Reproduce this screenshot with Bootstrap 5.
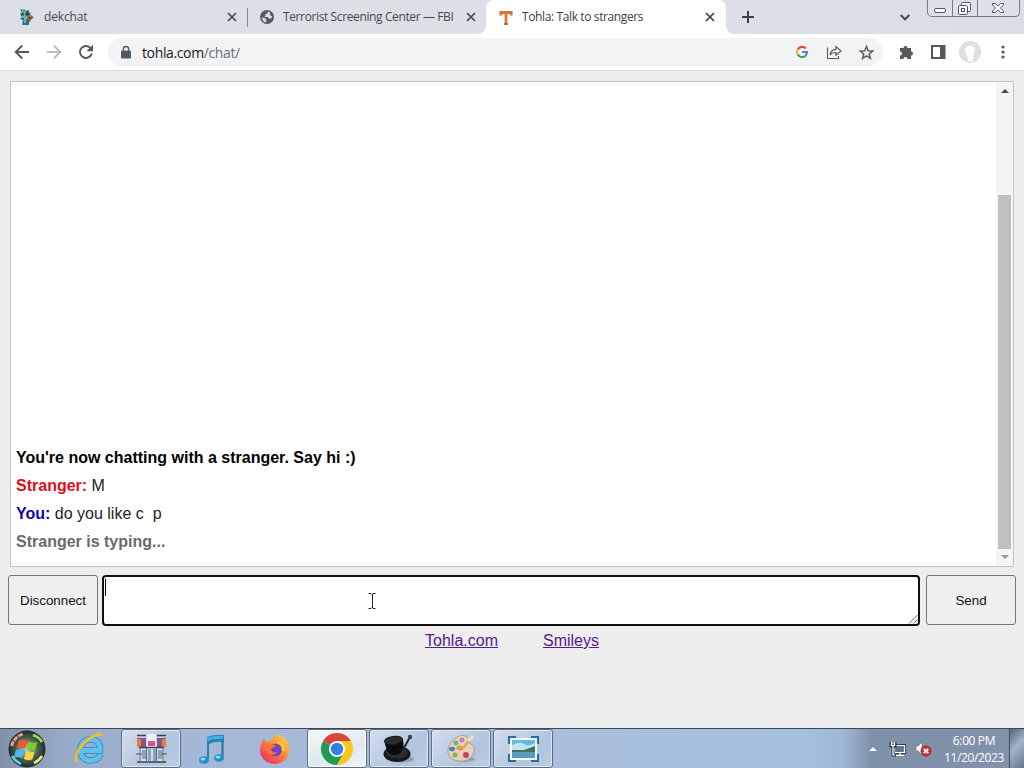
<!DOCTYPE html>
<html lang="en">
<head>
<meta charset="utf-8">
<meta name="viewport" content="width=device-width, initial-scale=1">
<title>Tohla: Talk to strangers</title>
<link href="https://cdn.jsdelivr.net/npm/bootstrap@5.3.0/dist/css/bootstrap.min.css" rel="stylesheet">
<style>
body{width:1024px;height:768px;background:#eee;font-family:"Liberation Sans",Arial,sans-serif;color:#222}
svg{display:block;flex:none;overflow:visible}
.ui-font{font-family:"Open Sans","Noto Sans",sans-serif}
.tabstrip{height:34px;background:linear-gradient(90deg,#dddfe7,#dcdfe5 70%,#dbdee6 85%,#dadde8)}
.tab-item{height:34px;font-size:12px;letter-spacing:-.38px;color:#45484c;line-height:34px}
.tab-sep{width:1px;height:19px;background:#85888f}
.tab-live{width:240px;background:#fff;border-radius:8px 8px 0 0;color:#3c4043}
.tab-live::before,.tab-live::after{content:"";position:absolute;bottom:0;width:8px;height:8px}
.tab-live::before{left:-8px;background:radial-gradient(circle at 0 0,transparent 7.5px,#fff 8px)}
.tab-live::after{right:-8px;background:radial-gradient(circle at 100% 0,transparent 7.5px,#fff 8px)}
.win-controls{width:93px;height:17px;border:1px solid #777b84;border-top:0;border-radius:0 0 5px 5px;background:#dfe1ea}
.win-controls>span{border-right:1px solid #777b84}
.toolbar{height:37px;background:#fff;border-bottom:1px solid #dedede}
.omnibox{width:775px;height:28px;background:#f1f3f4;border-radius:14px}
.address{font-size:14px;letter-spacing:-.37px;color:#202124}
.address span{color:#6b6f74}
.page{height:657px;padding:10px 8px 0}
.chatlog{width:1004px;height:486px;margin-left:2px;border:1px solid #c4c4c4;background:#fff}
.chat-lines{padding:0 0 10px 5px;font-size:16px;line-height:28px;white-space:pre}
.c-sys{color:#000}.c-them{color:#e10f14}.c-you{color:#0b06b4}.c-typing{color:#6a6a6a}
.scroller{width:17px;background:#f5f5f5}
.scroll-thumb{width:13px;height:354px;margin-top:102px;background:#bfbfbf}
.chat-btn{width:90px;height:50px;padding:2px 0 0;border:1px solid #767676;border-radius:3px;background:#efefef;color:#111;font-size:13.333px}
.entry{width:818px;height:51px;border:2px solid #101010;border-radius:4px;background:#fff}
.caret{width:1px;height:17px;background:#000;margin:2px 0 0 1px}
.ibeam{left:264px;top:16px}
.grip{right:0;bottom:0}
.links{font-size:16px;line-height:20px;gap:45px}
.links a{color:#551a8b;text-decoration:underline}
.taskbar{height:40px;border-top:1px solid #3c4659;background:linear-gradient(90deg,#8192aa 0,#96a9c5 60px,#a4b8d6 180px,#a9bfdc 600px,#a5bfdf 810px,#a0b8d6 842px,#7f91a9 872px,#8192a9 1008px)}
.task-btn{width:60px;height:39px;border:1px solid #5d6c85;border-radius:3px;background:linear-gradient(135deg,#d4deed,#b1c4de 65%,#bccde3);box-shadow:inset 0 0 0 1px #dce6f2}
.task-on{background:linear-gradient(160deg,#f5f8fb,#dee8ef 60%,#eef5f8);box-shadow:inset 0 0 0 1px #fff}
.clock{font-size:12px;line-height:17px;color:#fff;letter-spacing:-.37px;width:70px}
.peek{width:15px;border-left:1px solid #3f4d61;background:linear-gradient(135deg,#56657a,#a4b2c4 45%,#66758b)}
</style>
<script src="https://cdn.jsdelivr.net/npm/bootstrap@5.3.0/dist/js/bootstrap.bundle.min.js"></script>
</head>
<body class="d-flex flex-column overflow-hidden m-0">
<header class="ui-font">
  <div class="tabstrip d-flex">
    <div class="tab-item d-flex align-items-center" style="width:247px">
      <svg style="margin:0 7px 0 18px" width="19" height="18" viewBox="0 0 19 18"><path d="M2 1l3 1 1-1 2 2 2-1 2 3 1 3-2 1 1 3 1 1-2 1v3H4l1-5-3-1 2-2-2-3 2-1z" fill="#2f6f72"/><path d="M4 3l3 1v3l2 4M4 8l3 2v5" stroke="#76bbb6" stroke-width="1.800" fill="none"/><path d="M9 7l5 .5 2 2-4 3-3-2z" fill="#bd654a"/><path d="M8 5h2v2H8zM3 6h2M10 10h4" stroke="#273d43" fill="none"/></svg>
      <span class="flex-grow-1" style="letter-spacing:-.15px">dekchat</span>
      <svg style="margin-right:7px" width="16" height="16" viewBox="0 0 16 16"><path d="M4 4l8 8m0-8l-8 8" stroke="#45484c" stroke-width="1.700"/></svg>
    </div>
    <span class="tab-sep align-self-center"></span>
    <div class="tab-item d-flex align-items-center" style="width:238px">
      <svg style="margin:0 9px 0 12px" width="14" height="14" viewBox="0 0 14 14"><circle cx="7" cy="7" r="7" fill="#55595d"/><path d="M8 1.800L7.300 3.500 5.500 4v1.500L4.500 7H8l.6 1.600 1.900.2L12.300 7 11 5.600 9.500 5l.8-1.600L9.500 2z" fill="#dde0e6"/><path d="M1.500 7.200L4.700 8l1.600 1.500v3L3.500 11.500z" fill="#dde0e6"/></svg>
      <span class="flex-grow-1 text-nowrap">Terrorist Screening Center — FBI</span>
      <svg style="margin-right:7px" width="16" height="16" viewBox="0 0 16 16"><path d="M4 4l8 8m0-8l-8 8" stroke="#45484c" stroke-width="1.700"/></svg>
    </div>
    <div class="tab-item tab-live position-relative d-flex align-items-center">
      <svg style="margin:0 9px 0 13px" width="14" height="15" viewBox="0 0 14 15"><path d="M1.800 5.500V2.500h10.400v3M7 2.500V14" stroke="#dc752c" stroke-width="2.800" fill="none"/><path d="M5 14h4" stroke="#c76a2d" stroke-width="2"/></svg>
      <span class="flex-grow-1">Tohla: Talk to strangers</span>
      <svg class="me-2" width="16" height="16" viewBox="0 0 16 16"><path d="M4 4l8 8m0-8l-8 8" stroke="#3c4043" stroke-width="1.700"/></svg>
    </div>
    <svg class="align-self-center" style="margin-left:16px" width="12" height="12" viewBox="0 0 12 12"><path d="M6 0v12M0 6h12" stroke="#3c4043" stroke-width="2"/></svg>
    <svg class="align-self-center ms-auto" style="margin-right:17px" width="10" height="7" viewBox="0 0 10 7"><path d="M.7 1L5 5.400 9.300 1" stroke="#45484c" stroke-width="2" fill="none"/></svg>
    <div class="win-controls d-flex me-1">
      <span style="width:25px"><svg width="24" height="16"><rect x="6.500" y="8.500" width="11" height="4" rx="1.500" fill="#f6f6f8" stroke="#555963"/></svg></span>
      <span style="width:25px"><svg width="24" height="16" fill="#f6f6f8" stroke="#555963"><rect x="8.500" y="2.500" width="9" height="9" rx="1"/><rect x="5.500" y="5.500" width="9" height="9" rx="1"/><rect x="8.500" y="8.500" width="3" height="3"/></svg></span>
      <svg width="40" height="16"><path d="M14.500 3.500h3l2.500 2.500 2.500-2.500h3v1.500l-3 3 3 3v1.500h-3l-2.500-2.500-2.500 2.500h-3v-1.500l3-3-3-3z" fill="#f6f6f8" stroke="#555963"/></svg>
    </div>
  </div>
  <div class="toolbar d-flex align-items-center">
    <svg style="margin-left:14px" width="16" height="16" viewBox="0 0 16 16"><path d="M15 8H2M8.200 1.500L1.700 8l6.500 6.500" stroke="#55585c" stroke-width="1.900" fill="none"/></svg>
    <svg class="ms-3" width="16" height="16" viewBox="0 0 16 16"><path d="M1 8h13M7.800 1.500L14.300 8l-6.500 6.500" stroke="#babcbe" stroke-width="1.900" fill="none"/></svg>
    <svg class="ms-3" width="16" height="16" viewBox="0 0 16 16"><path d="M13 4.600A6 6 0 1 0 13.800 9.500" stroke="#55585c" stroke-width="1.900" fill="none"/><path d="M15 .8v6.500H8.500z" fill="#55585c"/></svg>
    <div class="omnibox d-flex align-items-center" style="margin-left:14px">
      <svg style="margin:0 11px 0 13px" width="10" height="13" viewBox="0 0 10 13"><rect y="4.500" width="10" height="8" rx="1" fill="#55585c"/><path d="M2.300 5V3.200a2.700 2.700 0 0 1 5.400 0V5" stroke="#55585c" stroke-width="1.300" fill="none"/></svg>
      <span class="address flex-grow-1">tohla.com<span>/chat/</span></span>
      <svg width="12" height="12" viewBox="0 0 12 12" fill="none" stroke-width="2.100"><path d="M9.800 2.500A5 5 0 0 0 1.700 3.500" stroke="#df4b3c"/><path d="M1.700 3.500a5 5 0 0 0 0 5" stroke="#f0b51b"/><path d="M1.700 8.500a5 5 0 0 0 7.800 1.200" stroke="#3ba55a"/><path d="M9.500 9.700A5 5 0 0 0 11 6H6" stroke="#4285e8"/></svg>
      <svg style="margin-left:18px" width="16" height="16" viewBox="0 0 16 16"><path d="M1.500 3.500v11h11V12M4 11c.4-4 2.500-5.500 6-5.700V2.500L15 7l-5 4.300V8.500C7 8.500 5.300 9 4 11z" stroke="#5a5d61" stroke-width="1.200" fill="none"/></svg>
      <svg style="margin:0 9px 0 17px" width="15" height="15" viewBox="0 0 15 15"><path d="M7.500 1.500l1.700 4.200 4.500.3-3.500 2.900 1.200 4.500-3.900-2.500-3.900 2.500 1.200-4.500L1.300 6l4.500-.3z" stroke="#5a5d61" stroke-width="1.500" fill="none"/></svg>
    </div>
    <svg style="margin-left:16px" width="15" height="15" viewBox="0 0 15 15"><path d="M1 3h3.500a2 2 0 1 1 4 0H12v3.500a2 2 0 1 1 0 4V14H8.500a2 2 0 0 0-4 0H1v-3.500a2 2 0 0 0 0-4z" fill="#55585c"/></svg>
    <svg style="margin-left:17px" width="15" height="14" viewBox="0 0 15 14"><rect x="1" y="1" width="12.500" height="12" fill="none" stroke="#55585c" stroke-width="2"/><path d="M9 1h5v12H9z" fill="#55585c"/></svg>
    <svg style="margin-left:13px" width="22" height="22" viewBox="0 0 22 22"><circle cx="11" cy="11" r="11" fill="#dedede"/><path d="M11 4.500c4 0 5.200 3 4.700 6-.3 2-1.500 3.500-1.500 5.500 0 2 .3 3 .3 4.500h-6c.5-2 .2-3.500-.3-5C7 13.500 6.200 12 6.200 9.500s1.800-5 4.800-5z" fill="#fff"/></svg>
    <svg style="margin-left:20px" width="4" height="14" fill="#55585c"><circle cx="2" cy="2" r="1.600"/><circle cx="2" cy="7" r="1.600"/><circle cx="2" cy="12" r="1.600"/></svg>
  </div>
</header>
<main class="page">
  <section class="chatlog d-flex">
    <div class="chat-lines flex-grow-1 d-flex flex-column justify-content-end">
      <div class="fw-bold c-sys">You're now chatting with a stranger. Say hi :)</div>
      <div><b class="c-them">Stranger:</b> M</div>
      <div><b class="c-you">You:</b> do you like c  p</div>
      <div class="fw-bold c-typing">Stranger is typing...</div>
    </div>
    <div class="scroller d-flex flex-column align-items-center">
      <svg style="margin-top:7px" width="8" height="4"><path d="M0 4l4-4 4 4z" fill="#484848"/></svg>
      <div class="scroll-thumb"></div>
      <svg style="margin-top:6px" width="8" height="4"><path d="M0 0l4 4 4-4z" fill="#9a9a9a"/></svg>
    </div>
  </section>
  <div class="d-flex align-items-start" style="margin-top:8px">
    <button class="chat-btn">Disconnect</button>
    <div class="entry position-relative" style="margin:0 6px 0 4px">
      <div class="caret"></div>
      <svg class="ibeam position-absolute" width="8" height="16"><path d="M.5 .5h2.500l1 1 1-1h2.500M.5 15.500h2.500l1-1 1 1h2.500M4.500 1v14" stroke="#222" fill="none"/></svg>
      <svg class="grip position-absolute" width="10" height="10"><path d="M1 9.500L9.500 1M5.500 9.500l4-4" stroke="#666" fill="none"/></svg>
    </div>
    <button class="chat-btn">Send</button>
  </div>
  <div class="links d-flex justify-content-center" style="margin-top:5px"><a href="#">Tohla.com</a><a href="#">Smileys</a></div>
</main>
<footer class="taskbar d-flex align-items-center ui-font">
  <svg style="margin-left:7px" width="40" height="39" viewBox="0 0 40 39"><defs><radialGradient id="orb"><stop offset="0" stop-color="#c8d8b0"/><stop offset=".55" stop-color="#4c6a50"/><stop offset="1" stop-color="#20292c"/></radialGradient></defs><circle cx="20" cy="20" r="18.500" fill="url(#orb)"/><path d="M4.500 17A17 17 0 0 1 16 5" stroke="#e598a5" stroke-width="3" fill="none" stroke-dasharray="5 1"/><path d="M26 6q6 2 9 7" stroke="#a2df50" stroke-width="2.500" fill="none"/><path d="M5 27q3 5 9 8" stroke="#69cbe4" stroke-width="2.500" fill="none"/><path d="M27 34q5-2 8-7" stroke="#efe77d" stroke-width="2.500" fill="none"/><path d="M12 11.500q5-2.500 8.500 0l-2.300 8q-4-2-8.700 0z" fill="#ef592c"/><path d="M22 12.500q4 2.500 8.500.2l-2.300 7.800q-4 2-8.500-.2z" fill="#83c72f"/><path d="M9 21q5-2 8.700.2l-2.300 8q-4-2.500-8.700-.2z" fill="#55b5f0"/><path d="M19.200 22q4 2.500 8.500.2l-2.300 8q-4 2-8.500-.2z" fill="#ffd24a"/></svg>
  <svg style="margin-left:27px" width="32" height="32" viewBox="0 0 32 32"><path d="M26.500 21.500c-2 4.500-5.500 6-10 6C10 27.500 6.500 23 6.500 17S10.500 6.500 16.500 6.500c7 0 10 4.500 9.500 11H9" stroke="#2587c6" stroke-width="6.500" fill="none"/><path d="M26.500 21.500c-2 4.500-5.500 6-10 6C10 27.500 6.500 23 6.500 17S10.500 6.500 16.500 6.500c7 0 10 4.500 9.500 11H9" stroke="#5cc3ec" stroke-width="5" fill="none"/><path d="M3 28.500C-1 24 7 10 18 4c6-3.500 10-3 10-1" stroke="#eebc35" stroke-width="2.700" fill="none"/></svg>
  <div class="task-btn d-flex align-items-center justify-content-center" style="margin-left:15px"><svg width="31" height="30" viewBox="0 0 31 30"><path d="M3 9h25v19H3z" fill="#d6dde5"/><path d="M1 4h9v9H1zM21 4h9v9h-9z" fill="#a94b6f"/><path d="M1 5h4v8H1zM26 5h4v8h-4z" fill="#dc843f"/><path d="M7 4h3v10H7zM22 4h3v10h-3z" fill="#765aa0"/><path d="M11 0h9v14h-9z" fill="#eef0f3"/><path d="M12 7h7v5h-7z" fill="#ce568b"/><path d="M6 16h4v9H6zM12 15h3v12h-3zM17 15h3v12h-3zM22 16h4v9h-4z" fill="#8aa6bd"/><path d="M1 1.500h9M21 1.500h9M1 28h29M3 13.500h25" stroke="#3e4048" stroke-width="1.500"/><path d="M4 14v14M27 14v14M10.500 14v13M20.500 14v13" stroke="#5e6672"/><path d="M0 20h6M25 20h6" stroke="#55555d"/></svg></div>
  <svg style="margin-left:18px" width="25" height="30" viewBox="0 0 25 30"><path d="M8 3q8-3 17-2v7q-9-1-15 2v15H8z" fill="#2685bd"/><path d="M8 4q8-3 16-2v3q-8-1-15 2z" fill="#46aee1"/><path d="M23.500 7v17" stroke="#246f9e" stroke-width="2"/><ellipse cx="5" cy="26" rx="5" ry="3.800" fill="#238ec9"/><ellipse cx="20" cy="24" rx="5" ry="3.800" fill="#238ec9"/><ellipse cx="4" cy="25" rx="2.500" ry="1.500" fill="#8edbf5"/><ellipse cx="19" cy="23" rx="2.500" ry="1.500" fill="#8edbf5"/></svg>
  <svg style="margin-left:36px" width="30" height="31" viewBox="0 0 30 31"><defs><linearGradient id="fox" x1="1" y1="0" x2=".2" y2="1"><stop stop-color="#ffe548"/><stop offset=".45" stop-color="#ff9535"/><stop offset="1" stop-color="#e92d65"/></linearGradient></defs><path d="M17 0l5 5 1-2c5 6 7 10 6 16-1 7-7 12-14 12S0 26 0 17C0 12 2 8 4 5l2 4 4-1c2-4 6-4 7-8z" fill="url(#fox)"/><circle cx="15.500" cy="17" r="6.500" fill="#7744bd"/><path d="M5 10l7 1 4 2-5 3c0 3 3 4 6 3-3 5-10 2-11-2z" fill="#ff7139"/><path d="M17 9c5 1 7 4 6 9" stroke="#ffc440" stroke-width="3" fill="none"/></svg>
  <div class="task-btn task-on d-flex align-items-center justify-content-center" style="margin-left:17px"><svg width="32" height="32" viewBox="0 0 32 32"><path d="M16 16L2.140 8A16 16 0 0 1 29.860 8z" fill="#db4437"/><path d="M16 16L2.140 8A16 16 0 0 0 16 32l7-12z" fill="#219a55"/><path d="M16 16l7 4-7 12A16 16 0 0 0 29.860 8H16z" fill="#fbc51c"/><circle cx="16" cy="16" r="8" fill="#fff"/><circle cx="16" cy="16" r="6.200" fill="#357fe4"/></svg></div>
  <div class="task-btn d-flex align-items-center justify-content-center" style="margin-left:2px"><svg width="30" height="29" viewBox="0 0 30 29"><ellipse cx="18" cy="25" rx="12" ry="3.500" fill="#78889c" opacity=".6"/><ellipse cx="13" cy="20" rx="13.500" ry="8" fill="#141618"/><ellipse cx="13" cy="19" rx="11" ry="5.500" fill="#2b2d31"/><path d="M0 7Q1 3 9 2t10 3l1 11q-3 5-9 5t-8-4z" fill="#0b0c0d"/><ellipse cx="9.500" cy="6.500" rx="9" ry="4" fill="#292b2e" transform="rotate(-8 9 6)"/><path d="M26 3L14 25" stroke="#252b31" stroke-width="2"/><circle cx="26" cy="3" r="2.200" fill="#3d4349"/></svg></div>
  <div class="task-btn d-flex align-items-center justify-content-center" style="margin-left:2px"><svg width="30" height="29" viewBox="0 0 30 29"><ellipse cx="18" cy="25" rx="11" ry="3" fill="#788ca7" opacity=".6"/><path d="M10 4c5-4 10-3 12 0s-1 5 3 6c4 2 4 8 1 12-4 6-15 7-21 2C-1 19 2 9 10 4z" fill="#e6d1bc" stroke="#b49986"/><circle cx="10" cy="9" r="2.500" fill="#5eb59a"/><circle cx="16" cy="6" r="2.500" fill="#ba87bb"/><ellipse cx="6" cy="15" rx="3" ry="2.300" fill="#4586ba"/><ellipse cx="14" cy="14" rx="3.500" ry="2.500" fill="#e39a43"/><circle cx="20" cy="21" r="3" fill="#c24660"/><circle cx="9" cy="21" r="2.500" fill="#73b954"/><path d="M26 3l-9 11" stroke="#e6a752" stroke-width="2.500"/><path d="M27 2l-5 5" stroke="#eee2b5" stroke-width="3"/></svg></div>
  <div class="task-btn d-flex align-items-center justify-content-center" style="margin-left:2px"><svg width="31" height="26" viewBox="0 0 31 26"><path d="M2 2h27v22H2z" fill="#f4fafc"/><path d="M4 4h23v18H4z" fill="#65b8df"/><path d="M4 9q8-4 12-1t11-1v8H4z" fill="#c2e4f0"/><path d="M4 14q7 0 12 0l11-4v6H4z" fill="#3b7465"/><path d="M4 16h23v6H4z" fill="#5a9aba"/><path d="M1 8V1h7M23 1h7v7M30 18v7h-7M8 25H1v-7" stroke="#276da3" stroke-width="2" fill="none"/></svg></div>
  <svg class="ms-auto" style="margin-right:17px" width="8" height="4"><path d="M0 4l4-4 4 4z" fill="#f4f7fb"/></svg>
  <svg style="margin-right:9px;margin-left:-4px" width="16" height="16" viewBox="0 0 16 16"><path d="M4.500 4.500h10v7h-10z" fill="#60758a" stroke="#303d4a" stroke-width="3"/><path d="M4.500 4.500h10v7h-10zM6 14.500h8M10 12v3" fill="#60758a" stroke="#fff" stroke-width="1.200"/><path d="M1 1v4h4V1M3 5v9h3" stroke="#303d4a" stroke-width="3" fill="#fff"/><path d="M1.500 1v3.500h3V1M3 5v9h2" stroke="#fff" stroke-width="1.200" fill="none"/></svg>
  <svg style="margin-right:7px" width="17" height="16" viewBox="0 0 17 16"><path d="M1 5h2l4-4v13l-4-4H1z" fill="#fff" stroke="#64717f" stroke-width=".7"/><circle cx="11" cy="10" r="5.200" fill="#cf3032" stroke="#8b2528" stroke-width=".6"/><path d="M8.800 7.800l4.400 4.400m0-4.400l-4.400 4.400" stroke="#fff" stroke-width="1.700"/></svg>
  <div class="clock text-center text-nowrap d-flex flex-column align-items-center"><span>6:00 PM</span><span>11/20/2023</span></div>
  <div class="peek align-self-stretch"></div>
</footer>
</body>
</html>
